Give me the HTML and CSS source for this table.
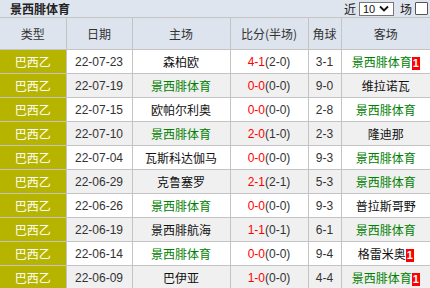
FILE: index.html
```html
<!DOCTYPE html>
<html>
<head>
<meta charset="utf-8">
<link rel="stylesheet" href="styles.css">
</head>
<body>
<div class="panel">
  <div class="titlebar">
    <span class="title">景西腓体育</span>
    <div class="filter">
      <span class="lbl">近</span>
      <span class="select">10<svg class="chev" width="10" height="7" viewBox="0 0 10 7"><path d="M1 1.5 L5 5.5 L9 1.5" fill="none" stroke="#111" stroke-width="1.8"/></svg></span>
      <span class="lbl">场</span>
      <span class="check"></span>
    </div>
  </div>
  <table class="grid">
    <colgroup>
      <col class="c1"><col class="c2"><col class="c3"><col class="c4"><col class="c5"><col class="c6">
    </colgroup>
    <thead>
      <tr><th>类型</th><th>日期</th><th>主场</th><th>比分(半场)</th><th>角球</th><th>客场</th></tr>
    </thead>
    <tbody>
      <tr><td class="lg">巴西乙</td><td class="dt">22-07-23</td><td>森柏欧</td><td class="sc"><span class="red">4-1</span>(2-0)</td><td class="dt">3-1</td><td><span class="grn">景西腓体育</span><span class="badge">1</span></td></tr>
      <tr class="alt"><td class="lg">巴西乙</td><td class="dt">22-07-19</td><td class="grn">景西腓体育</td><td class="sc"><span class="red">0-0</span>(0-0)</td><td class="dt">9-0</td><td>维拉诺瓦</td></tr>
      <tr><td class="lg">巴西乙</td><td class="dt">22-07-15</td><td>欧帕尔利奥</td><td class="sc"><span class="red">0-0</span>(0-0)</td><td class="dt">2-8</td><td class="grn">景西腓体育</td></tr>
      <tr class="alt"><td class="lg">巴西乙</td><td class="dt">22-07-10</td><td class="grn">景西腓体育</td><td class="sc"><span class="red">2-0</span>(1-0)</td><td class="dt">2-3</td><td>隆迪那</td></tr>
      <tr><td class="lg">巴西乙</td><td class="dt">22-07-04</td><td>瓦斯科达伽马</td><td class="sc"><span class="red">0-0</span>(0-0)</td><td class="dt">9-3</td><td class="grn">景西腓体育</td></tr>
      <tr class="alt"><td class="lg">巴西乙</td><td class="dt">22-06-29</td><td>克鲁塞罗</td><td class="sc"><span class="red">2-1</span>(2-1)</td><td class="dt">5-3</td><td class="grn">景西腓体育</td></tr>
      <tr><td class="lg">巴西乙</td><td class="dt">22-06-26</td><td class="grn">景西腓体育</td><td class="sc"><span class="red">0-0</span>(0-0)</td><td class="dt">9-3</td><td>普拉斯哥野</td></tr>
      <tr class="alt"><td class="lg">巴西乙</td><td class="dt">22-06-19</td><td>景西腓航海</td><td class="sc"><span class="red">1-1</span>(0-1)</td><td class="dt">6-1</td><td class="grn">景西腓体育</td></tr>
      <tr><td class="lg">巴西乙</td><td class="dt">22-06-14</td><td class="grn">景西腓体育</td><td class="sc"><span class="red">0-0</span>(0-0)</td><td class="dt">9-4</td><td>格雷米奥<span class="badge">1</span></td></tr>
      <tr class="alt"><td class="lg">巴西乙</td><td class="dt">22-06-09</td><td>巴伊亚</td><td class="sc"><span class="red">1-0</span>(0-0)</td><td class="dt">4-4</td><td><span class="grn">景西腓体育</span><span class="badge">1</span></td></tr>
    </tbody>
  </table>
</div>
</body>
</html>
```
FILE: styles.css
```css
html, body {
  margin: 0;
  padding: 0;
  background: #ffffff;
}
.panel {
  width: 430px;
  font-family: "Noto Sans CJK SC", "Liberation Sans", sans-serif;
  font-size: 12px;
  color: #222;
}
.titlebar {
  height: 17px;
  background: #dfe5ee;
  display: flex;
  align-items: center;
  justify-content: space-between;
  padding-left: 10px;
  box-sizing: border-box;
}
.title {
  font-weight: bold;
  font-size: 12px;
  color: #222;
  line-height: 17px;
}
.filter {
  display: flex;
  align-items: center;
  gap: 3px;
  padding-right: 2px;
}
.lbl {
  font-size: 12px;
  color: #222;
}
.select {
  display: flex;
  align-items: center;
  gap: 4px;
  height: 12px;
  width: 30px;
  padding-left: 3px;
  border: 1px solid #767676;
  background: #fff;
  font-family: "Liberation Sans", sans-serif;
  font-size: 11px;
  line-height: 12px;
  color: #111;
  margin-right: 3px;
}
.chev {
  display: block;
}
.check {
  width: 11px;
  height: 11px;
  border: 1px solid #555;
  background: #fff;
  border-radius: 1px;
}
.grid {
  width: 430px;
  border-collapse: collapse;
  table-layout: fixed;
}
.c1 { width: 66px; }
.c2 { width: 66px; }
.c3 { width: 98px; }
.c4 { width: 78px; }
.c5 { width: 33px; }
.c6 { width: 89px; }
.grid th, .grid td {
  border: 1px solid #c4c4c4;
  text-align: center;
  padding: 0;
  white-space: nowrap;
  overflow: hidden;
}
.grid th:first-child, .grid td:first-child { border-left: none; }
.grid th:last-child, .grid td:last-child { border-right: none; }
.grid th {
  height: 31px;
  background: #dde4ee;
  font-weight: normal;
  color: #333;
  font-size: 12px;
}
.grid td {
  height: 23px;
  background: #ffffff;
  color: #111;
  font-size: 12px;
}
.grid tr.alt td { background: #f0f0f0; }
.grid td.lg {
  background: #b7b400;
  color: #ffffff;
}
.grid tr.alt td.lg { background: #b7b400; }
.dt, .sc {
  font-family: "Liberation Sans", sans-serif;
  font-size: 12px;
  color: #333 !important;
}
.red { color: #ff0000; }
.grn { color: #008000; }
td.grn { color: #008000; }
.badge {
  display: inline-block;
  background: #ff0000;
  color: #fff;
  font-family: "Liberation Sans", sans-serif;
  font-weight: bold;
  font-size: 11px;
  line-height: 13px;
  width: 8px;
  text-align: center;
  vertical-align: 0px;
}
```
